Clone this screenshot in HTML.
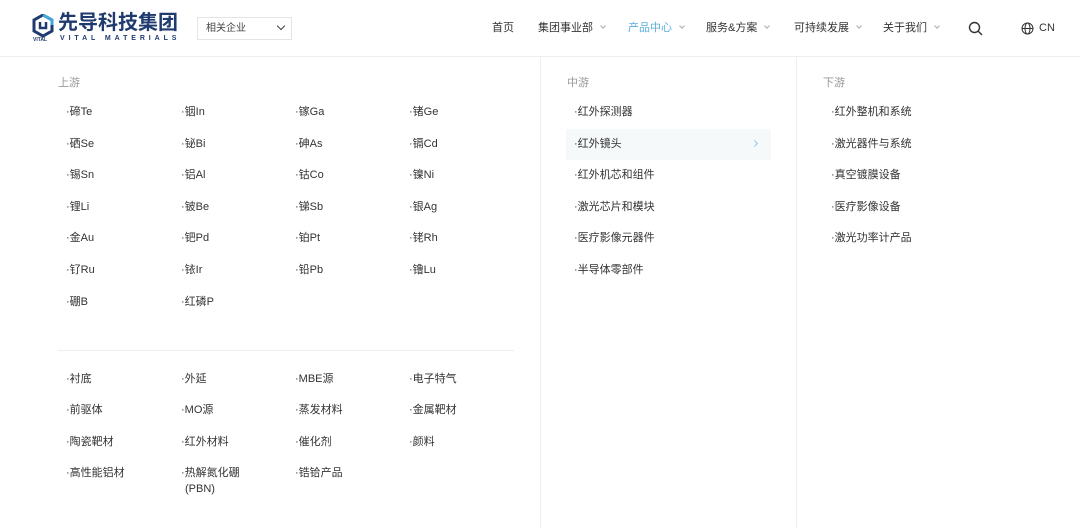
<!DOCTYPE html>
<html><head><meta charset="utf-8"><style>
*{margin:0;padding:0;box-sizing:border-box}
body{width:1080px;height:528px;overflow:hidden;background:#fff;font-family:"Liberation Sans","Noto Sans CJK SC",sans-serif;color:#333;position:relative}
.a{position:absolute;white-space:nowrap;font-size:11px;line-height:14px}
.lab{color:#999;font-size:11px}
.nav{position:absolute;top:21px;font-size:11px;line-height:14px;color:#333;white-space:nowrap}
.chev{display:inline-block;width:4px;height:4px;border-right:1px solid #aaa;border-bottom:1px solid #aaa;transform:rotate(45deg);margin-left:8px;position:relative;top:-3px}
</style></head><body>
<div style="position:absolute;left:0;top:56px;width:1080px;height:1px;background:#eee"></div>
<div style="position:absolute;left:540px;top:57px;width:1px;height:471px;background:#eee"></div>
<div style="position:absolute;left:796px;top:57px;width:1px;height:471px;background:#eee"></div>
<!-- logo -->
<svg style="position:absolute;left:32px;top:14px" width="22" height="24" viewBox="0 0 22 24"><path d="M11 1 L20 6 L20 17 L11 22 L2 17 L2 6 Z" fill="none" stroke="#1e3a6e" stroke-width="3"/><path d="M11 1 L20 6 L20 11" fill="none" stroke="#3fa9d8" stroke-width="3"/><path d="M8 8 V14 H14 V8" fill="none" stroke="#1e3a6e" stroke-width="2.5"/></svg>
<div class="a" style="left:33px;top:37px;font-size:5px;line-height:6px;font-weight:bold;color:#1e3a6e">VITAL</div>
<div class="a" style="left:58px;top:12px;font-size:20px;line-height:22px;font-weight:bold;color:#1e3a6e;letter-spacing:0">先导科技集团</div>
<div class="a" style="left:60px;top:35px;font-size:7px;line-height:8px;font-weight:bold;color:#1e3a6e;letter-spacing:3.9px">VITAL MATERIALS</div>
<div style="position:absolute;left:197px;top:17px;width:95px;height:23px;border:1px solid #e4e4e4"></div>
<div class="a" style="left:206px;top:22px;font-size:10px;color:#444">相关企业</div>
<div style="position:absolute;left:278px;top:23px;width:6px;height:6px;border-right:1.5px solid #444;border-bottom:1.5px solid #444;transform:rotate(45deg)"></div>
<!-- nav -->
<div class="nav" style="left:492px">首页</div>
<div class="nav" style="left:538px">集团事业部<span class="chev"></span></div>
<div class="nav" style="left:628px;color:#5aaedc">产品中心<span class="chev"></span></div>
<div class="nav" style="left:706px">服务&amp;方案<span class="chev"></span></div>
<div class="nav" style="left:794px">可持续发展<span class="chev"></span></div>
<div class="nav" style="left:883px">关于我们<span class="chev"></span></div>
<svg style="position:absolute;left:968px;top:21px" width="15" height="15" viewBox="0 0 15 15"><circle cx="6.5" cy="6.5" r="5" fill="none" stroke="#333" stroke-width="1.4"/><path d="M10 10 L14 14" stroke="#333" stroke-width="1.4"/></svg>
<svg style="position:absolute;left:1021px;top:22px" width="13" height="13" viewBox="0 0 13 13" fill="none" stroke="#333" stroke-width="1"><circle cx="6.5" cy="6.5" r="5.5"/><ellipse cx="6.5" cy="6.5" rx="2.5" ry="5.5"/><path d="M1 6.5H12"/></svg>
<div class="nav" style="left:1039px;font-size:11px">CN</div>
<!-- left -->
<div class="a lab" style="left:58px;top:76px">上游</div>
<div style="position:absolute;left:58px;top:350px;width:456px;height:1px;background:#eee"></div>
<!-- middle -->
<div class="a lab" style="left:567px;top:76px">中游</div>
<div style="position:absolute;left:566px;top:129px;width:205px;height:31px;background:#f6f9fa"></div>
<div style="position:absolute;left:752px;top:141px;width:5px;height:5px;border-right:1px solid #9cc9e0;border-top:1px solid #9cc9e0;transform:rotate(45deg)"></div>
<div class="a lab" style="left:823px;top:76px">下游</div>
<div id="L"></div>
<script>
var h='';
function put(x,y,t){h+='<div class="a" style="left:'+x+'px;top:'+(y-7)+'px">·'+t+'</div>';}
var cx=[66,181,295,409],ry=[112,144,175,207,238,270,302];
var up=[['碲Te','铟In','镓Ga','锗Ge'],['硒Se','铋Bi','砷As','镉Cd'],['锡Sn','铝Al','钴Co','镍Ni'],['锂Li','铍Be','锑Sb','银Ag'],['金Au','钯Pd','铂Pt','铑Rh'],['钌Ru','铱Ir','铅Pb','镥Lu'],['硼B','红磷P']];
up.forEach(function(r,i){r.forEach(function(t,j){put(cx[j],ry[i],t)})});
var ry2=[379,410,442,473];
var dn=[['衬底','外延','MBE源','电子特气'],['前驱体','MO源','蒸发材料','金属靶材'],['陶瓷靶材','红外材料','催化剂','颜料'],['高性能铝材','热解氮化硼','锆铪产品']];
dn.forEach(function(r,i){r.forEach(function(t,j){put(cx[j],ry2[i],t)})});
h+='<div class="a" style="left:185px;top:482px">(PBN)</div>';
['红外探测器','红外镜头','红外机芯和组件','激光芯片和模块','医疗影像元器件','半导体零部件'].forEach(function(t,i){put(574,ry[i],t)});
['红外整机和系统','激光器件与系统','真空镀膜设备','医疗影像设备','激光功率计产品'].forEach(function(t,i){put(831,ry[i],t)});
document.getElementById('L').outerHTML=h;
</script>
</body></html>
